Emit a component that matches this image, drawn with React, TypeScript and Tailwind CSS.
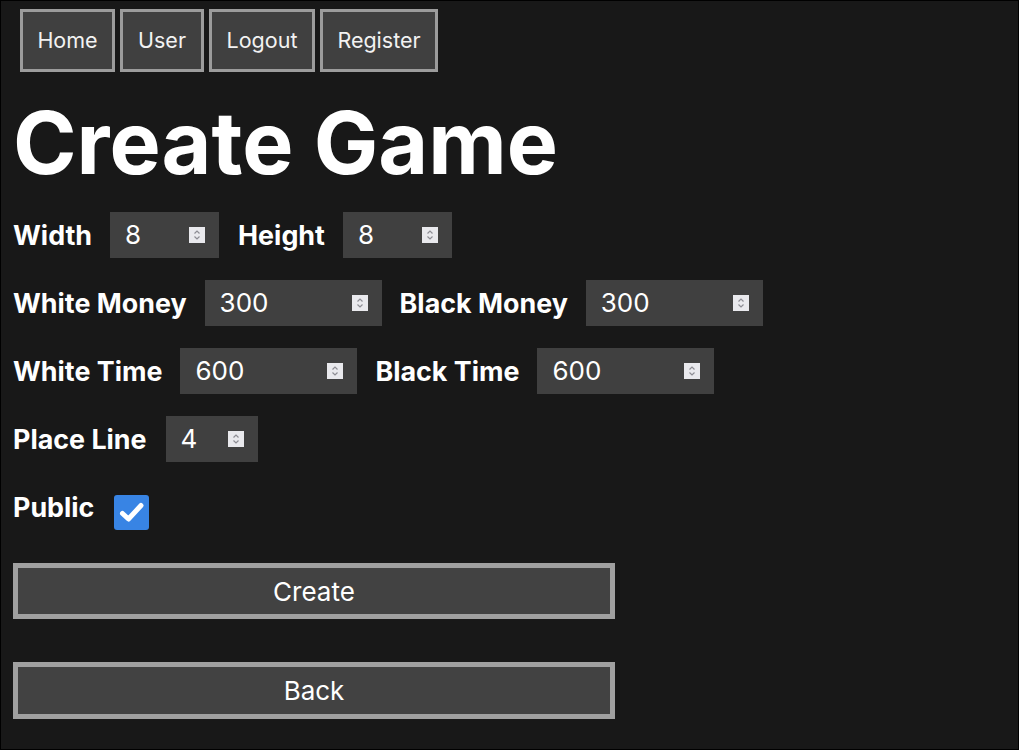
import React from 'react';

const font = { fontFamily: 'Inter, "Noto Sans", sans-serif' };

function Spinner() {
  return (
    <div className="flex h-4 w-4 items-center justify-center bg-[#e9e9ed]">
      <svg width="10" height="12" viewBox="0 0 10 12" fill="none" stroke="#8d8d94" strokeWidth="1.2">
        <path d="M2.5 4.5 L5 2 L7.5 4.5" />
        <path d="M2.5 7.5 L5 10 L7.5 7.5" />
      </svg>
    </div>
  );
}

function NumberField({ value, width }: { value: string; width: string }) {
  return (
    <div className={`flex h-[46px] items-center justify-between bg-[#404040] pl-[15px] pr-[14px] text-[26px] text-white ${width}`}>
      <span className="leading-none">{value}</span>
      <Spinner />
    </div>
  );
}

function Label({ children }: { children: React.ReactNode }) {
  return <span className="text-[26.85px] font-bold leading-[33px] text-white">{children}</span>;
}

const navItems = [
  { label: 'Home', w: 'w-[95px]' },
  { label: 'User', w: 'w-[84px]' },
  { label: 'Logout', w: 'w-[106px]' },
  { label: 'Register', w: 'w-[118px]' },
];

export default function App() {
  return (
    <div
      className="box-border h-[750px] w-full overflow-hidden border border-black bg-[#181818] pl-[12px] pt-[8px]"
      style={font}
    >
      <nav className="flex gap-[5px] pl-[7px]">
        {navItems.map((item) => (
          <button
            key={item.label}
            className={`h-[63px] border-[3px] border-[#9c9c9c] bg-[#404040] text-center text-[21.5px] text-[#f2f2f2] ${item.w}`}
          >
            {item.label}
          </button>
        ))}
      </nav>

      <h1 className="mt-[28px] text-[86px] font-bold leading-none text-white">Create Game</h1>

      <div className="mt-[26px] flex flex-col gap-[22px]">
        <div className="flex items-center">
          <Label>Width</Label>
          <div className="ml-[18px]">
            <NumberField value="8" width="w-[109px]" />
          </div>
          <div className="ml-[19px]">
            <Label>Height</Label>
          </div>
          <div className="ml-[18px]">
            <NumberField value="8" width="w-[109px]" />
          </div>
        </div>

        <div className="flex items-center">
          <Label>White Money</Label>
          <div className="ml-[18px]">
            <NumberField value="300" width="w-[177px]" />
          </div>
          <div className="ml-[18px]">
            <Label>Black Money</Label>
          </div>
          <div className="ml-[18px]">
            <NumberField value="300" width="w-[177px]" />
          </div>
        </div>

        <div className="flex items-center">
          <Label>White Time</Label>
          <div className="ml-[18px]">
            <NumberField value="600" width="w-[177px]" />
          </div>
          <div className="ml-[18px]">
            <Label>Black Time</Label>
          </div>
          <div className="ml-[18px]">
            <NumberField value="600" width="w-[177px]" />
          </div>
        </div>

        <div className="flex items-center">
          <Label>Place Line</Label>
          <div className="ml-[19px]">
            <NumberField value="4" width="w-[92px]" />
          </div>
        </div>

        <div className="flex items-center">
          <Label>Public</Label>
          <div className="ml-[20px] mt-[11px] flex h-[35px] w-[35px] items-center justify-center rounded-[3px] bg-[#3884e4]">
            <svg width="35" height="35" viewBox="0 0 35 35" fill="none" stroke="white" strokeWidth="5" strokeLinecap="round" strokeLinejoin="round">
              <path d="M8.5 18.5 L14.5 24 L27 10.5" />
            </svg>
          </div>
        </div>
      </div>

      <div className="mt-[33px] flex flex-col gap-[43px]">
        <button className="h-[56px] w-[602px] border-[5px] border-[#a0a0a0] bg-[#424242] text-[26px] text-white">
          Create
        </button>
        <button className="h-[57px] w-[602px] border-[5px] border-[#a0a0a0] bg-[#424242] text-[26px] text-white">
          Back
        </button>
      </div>
    </div>
  );
}
